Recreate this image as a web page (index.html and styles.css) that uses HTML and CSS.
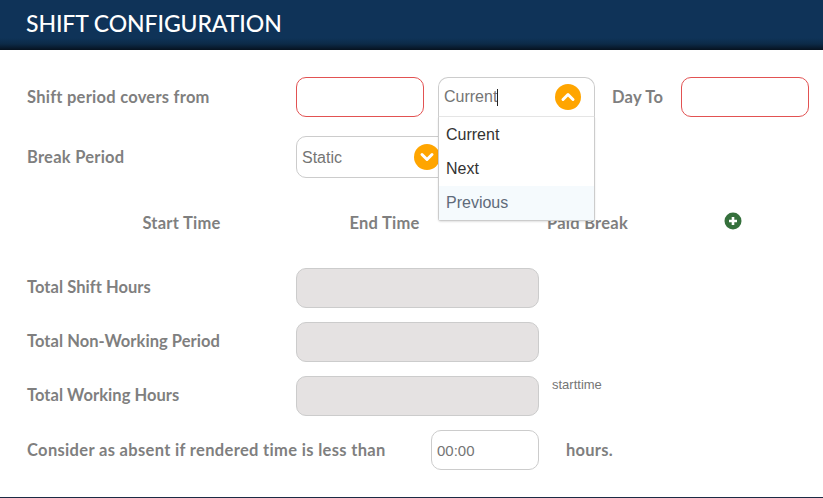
FILE: index.html
```html
<!DOCTYPE html>
<html lang="en">

<head>
  <meta charset="UTF-8">
  <title>Shift Configuration</title>
  <link rel="stylesheet" href="styles.css">
</head>

<body>
  <div class="page-header">
    <h1>SHIFT CONFIGURATION</h1>
  </div>

  <div class="form-body">
    <div class="row row-period">
      <label class="label">Shift period covers from</label>
      <input type="text" class="field field-day required">
      <div class="select select-open">
        <div class="select-value">
          <span>Current</span><span class="caret"></span>
          <span class="chevron">
            <svg viewBox="0 0 26 26" width="26" height="26">
              <path d="M8 15.5 L13 10.5 L18 15.5" fill="none" stroke="#fff" stroke-width="3" stroke-linecap="round" stroke-linejoin="round" />
            </svg>
          </span>
        </div>
        <ul class="select-menu">
          <li>Current</li>
          <li>Next</li>
          <li class="active">Previous</li>
        </ul>
      </div>
      <label class="label label-dayto">Day To</label>
      <input type="text" class="field field-day required">
    </div>

    <div class="row row-break">
      <label class="label">Break Period</label>
      <div class="select select-break">
        <div class="select-value">
          <span>Static</span>
          <span class="chevron">
            <svg viewBox="0 0 26 26" width="26" height="26">
              <path d="M8 10.5 L13 15.5 L18 10.5" fill="none" stroke="#fff" stroke-width="3" stroke-linecap="round" stroke-linejoin="round" />
            </svg>
          </span>
        </div>
      </div>
    </div>

    <div class="time-head">
      <div>Start Time</div>
      <div>End Time</div>
      <div>Paid Break</div>
      <div class="add-cell">
        <svg class="add-icon" viewBox="0 0 18 18" width="18" height="18">
          <circle cx="9" cy="9" r="8.5" fill="#35703c" />
          <path d="M9 5 V13 M5 9 H13" stroke="#fff" stroke-width="2.6" />
        </svg>
      </div>
    </div>

    <div class="row row-total">
      <label class="label">Total Shift Hours</label>
      <div class="field field-total"></div>
    </div>
    <div class="row row-total">
      <label class="label">Total Non-Working Period</label>
      <div class="field field-total"></div>
    </div>
    <div class="row row-total">
      <label class="label">Total Working Hours</label>
      <div class="field field-total"></div>
      <span class="hint">starttime</span>
    </div>
    <div class="row row-absent">
      <label class="label label-absent">Consider as absent if rendered time is less than</label>
      <input type="text" class="field field-time" value="00:00">
      <span class="label label-hours">hours.</span>
    </div>
  </div>
</body>

</html>
```

FILE: styles.css
```css
* {
  margin: 0;
  padding: 0;
  box-sizing: border-box;
}

body {
  font-family: 'Liberation Sans', Arial, sans-serif;
  background-color: #fff;
  height: 498px;
  overflow: hidden;
  border-bottom: 1px solid #1c2b45;
}

.page-header {
  height: 50px;
  padding: 9px 0 0 26px;
  background: linear-gradient(to bottom, #0f3358 0, #0f3358 38px, #0c2a47 44px, #06121f 50px);
}

.page-header h1 {
  font-family: Lato, sans-serif;
  font-size: 23px;
  line-height: 28px;
  font-weight: 500;
  color: #fff;
  letter-spacing: -0.1px;
}

.form-body {
  padding: 27px 0 0 27px;
}

.row {
  display: flex;
  align-items: center;
}

.label {
  font-family: Lato, sans-serif;
  font-size: 16.5px;
  font-weight: 700;
  letter-spacing: 0.25px;
  color: #7f7f7f;
  width: 269px;
  flex-shrink: 0;
}

.field {
  height: 40px;
  flex-shrink: 0;
  border: 1px solid #ccc;
  border-radius: 10px;
  background-color: #fff;
  outline: none;
  font-family: 'Liberation Sans', Arial, sans-serif;
  font-size: 15px;
  color: #757575;
  padding: 0 5px;
}

.required {
  border-color: #e25252;
}

.field-day {
  width: 128px;
}

.row-period {
  height: 40px;
  margin-bottom: 19px;
}

.row-period .select {
  margin-left: 14px;
}

.select {
  position: relative;
  flex-shrink: 0;
  width: 157px;
  height: 40px;
}

.select-value {
  height: 100%;
  display: flex;
  align-items: center;
  padding-left: 5px;
  font-size: 16px;
  color: #757575;
  border: 1px solid #ccc;
  border-radius: 10px;
  background-color: #fff;
}

.select-open {
  z-index: 2;
}

.select-open .select-value {
  border-bottom: 1px solid #e6e6e6;
  border-radius: 10px 10px 0 0;
}

.caret {
  width: 1px;
  height: 17px;
  background-color: #222;
}

.chevron {
  position: absolute;
  right: 14px;
  top: 7px;
  width: 26px;
  height: 26px;
  border-radius: 50%;
  background-color: #ffa500;
}

.chevron svg {
  display: block;
}

.select-menu {
  position: absolute;
  top: 40px;
  left: 0;
  width: 100%;
  padding-top: 1px;
  list-style: none;
  background-color: #fff;
  border: 1px solid #ccc;
  border-top: none;
  border-radius: 0 0 3px 3px;
  box-shadow: 0 1px 2px rgba(0, 0, 0, 0.12);
}

.select-menu li {
  height: 34px;
  line-height: 34px;
  padding-left: 7px;
  font-size: 16px;
  color: #333;
}

.select-menu li.active {
  background-color: #f5fafd;
  color: #5f6b7a;
}

.row-break {
  height: 42px;
}

.select-break {
  width: 158px;
  height: 42px;
}

.select-break .select-value span:first-child {
  padding-top: 1px;
}

.select-break .chevron {
  top: 8px;
}

.label-dayto {
  width: 69px;
  margin-left: 17px;
}

.time-head {
  display: grid;
  grid-template-columns: 203px 203px 203px 1fr;
  margin: 34px 0 0 53px;
  height: 22px;
  line-height: 22px;
  text-align: center;
  font-family: Lato, sans-serif;
  font-size: 16.5px;
  font-weight: 700;
  letter-spacing: 0.25px;
  color: #7f7f7f;
}

.add-cell {
  text-align: left;
  padding-left: 35px;
}

.add-icon {
  display: block;
}

.row-total {
  height: 40px;
  margin-bottom: 14px;
}

.row-total .label {
  letter-spacing: 0.05px;
  padding-bottom: 2px;
}

.time-head + .row-total {
  margin-top: 34px;
}

.field-total {
  width: 243px;
  background-color: #e5e2e2;
}

.hint {
  align-self: flex-start;
  margin: 1px 0 0 13px;
  font-size: 13px;
  color: #757575;
}

.row-absent {
  height: 40px;
}

.label-absent {
  width: 404px;
  letter-spacing: 0.33px;
}

.field-time {
  width: 108px;
}

.label-hours {
  width: auto;
  margin-left: 27px;
}
```
